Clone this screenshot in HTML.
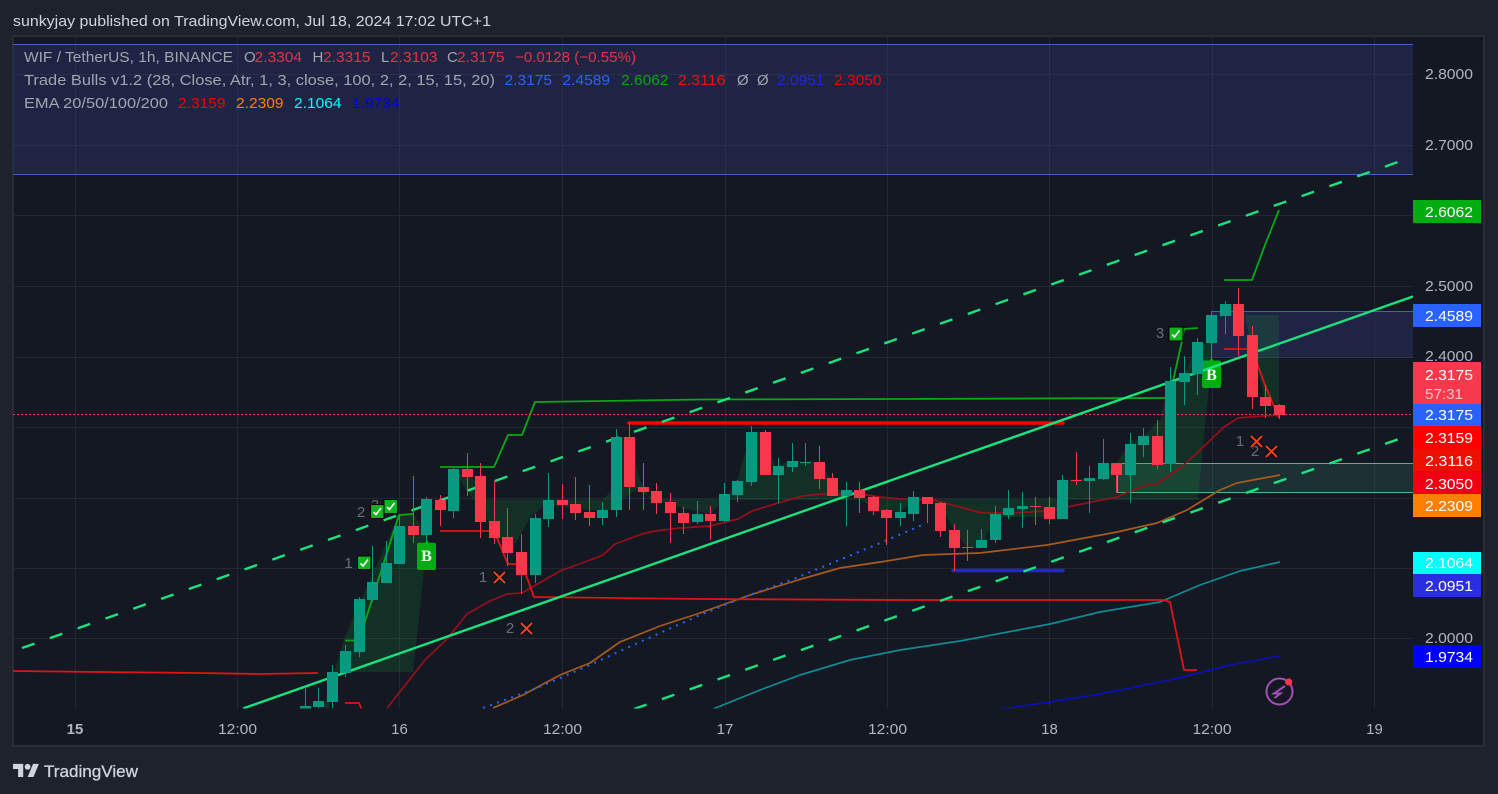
<!DOCTYPE html>
<html><head><meta charset="utf-8"><style>
html,body{margin:0;padding:0;background:#1e222d;width:1498px;height:794px;overflow:hidden}
svg{display:block;font-family:"Liberation Sans",sans-serif}
</style></head><body>
<svg width="1498" height="794" viewBox="0 0 1498 794" xmlns="http://www.w3.org/2000/svg">
<defs><clipPath id="p"><rect x="13" y="36" width="1400" height="672.5"/></clipPath></defs>
<rect width="1498" height="794" fill="#1e222d"/>
<rect x="13" y="36" width="1471" height="710" fill="#141823" stroke="#282c37" stroke-width="2"/>
<text x="13" y="26" font-size="15" fill="#d1d4dc" textLength="478" lengthAdjust="spacingAndGlyphs">sunkyjay published on TradingView.com, Jul 18, 2024 17:02 UTC+1</text>

<!-- grid -->
<g stroke="#232732" stroke-width="1" shape-rendering="crispEdges">
<path d="M75.5 37V708.5M237.5 37V708.5M399.5 37V708.5M562.5 37V708.5M725.5 37V708.5M887.5 37V708.5M1049.5 37V708.5M1212.5 37V708.5M1374.5 37V708.5"/>
<path d="M13 74.5H1413M13 145.5H1413M13 215.5H1413M13 286.5H1413M13 357.5H1413M13 427.5H1413M13 498.5H1413M13 568.5H1413M13 638.5H1413"/>
</g>

<g clip-path="url(#p)">
<!-- boxes -->
<rect x="13" y="44" width="1400" height="130" fill="#2a2f60" fill-opacity=".55"/>
<path d="M75.5 44V174M237.5 44V174M399.5 44V174M562.5 44V174M725.5 44V174M887.5 44V174M1049.5 44V174M1212.5 44V174M1374.5 44V174M13 74.5H1413M13 145.5H1413" stroke="#2a2f4a" shape-rendering="crispEdges"/>
<path d="M13 44.5H1413M13 174.5H1413" stroke="#3e63bd" shape-rendering="crispEdges"/>
<rect x="1211" y="311" width="202" height="46" fill="#2a2f60" fill-opacity=".55"/>
<path d="M1211.5 357V311.5H1413" fill="none" stroke="#3e63bd" shape-rendering="crispEdges"/>
<path d="M1211.5 357.5H1413" fill="none" stroke="#2e3550" shape-rendering="crispEdges"/>
<rect x="1117" y="463" width="296" height="30" fill="#4db592" fill-opacity=".16"/>
<path d="M1413 463.5H1117.5V492.5H1413" fill="none" stroke="#4db592" shape-rendering="crispEdges"/>

<!-- shaded areas -->
<g fill="#0aaa32" fill-opacity=".17">
<path d="M323 709L345 636L399 515L413 514L428 535L413 672H329V709Z"/>
<path d="M453 470L467 470L487 499.500H603L612 490L616 437H629L640 480L650 499H725L737 481L751 432H765L775 466L792 461L819 462L832 480L846 499H1057L1062 480L1103 478L1116 463L1130 444L1143 436L1160 420L1170 381L1185 373L1197 345L1211 343L1211 365L1198 498H1200L1198 500H1060L1060 517L995 517L981 548H967L954 530L940 505L930 500L915 500L900 512L880 510L860 500L846 500L836 500L800 500L740 500L724 500L710 514L670 505L635 490L610 510L590 510L545 505L530 518L510 553Z"/>
<path d="M1245 315H1279V405L1265 398L1252 350Z"/>
</g>

<!-- EMA lines -->
<g fill="none" stroke-width="1.7" stroke-linejoin="round">
<path stroke="#0c0fb4" d="M995 710L1050 702L1100 694L1170 680L1230 665L1280 656"/>
<path stroke="#0e8c94" d="M713 709L760 690L800 675L850 660L900 650L960 641L1050 624L1100 612L1160 602L1200 585L1240 571L1280 562"/>
<path stroke="#a85a1a" d="M493 708L523 695L560 675L590 663L620 642L660 626L700 613L750 595L798 580L840 568L887 561L923 555L980 553L1047 545L1117 532L1157 523L1187 510L1220 490L1237 483L1280 475"/>
<path stroke="#96101a" d="M387 708L425 660L447 639L467 614L490 601L507 594L522 593L560 571L590 560L603 555L615 544L642 534L655 531L680 528L710 526L738 519L752 511L778 503L803 496L820 494L860 494L880 497L900 499L933 500L982 513L1013 513L1047 511L1087 503L1117 497L1143 486L1157 484L1180 468L1197 453L1224 427L1238 418L1263 416L1280 415"/>
</g>
<path d="M483 708L537 688L590 665L620 651L700 615L750 595L796 578L885 541L922 525" fill="none" stroke="#2962ff" stroke-width="2" stroke-dasharray="2 5.500"/>

<!-- step lines -->
<g fill="none" stroke-width="1.800" stroke-linejoin="round">
<path stroke="#0aa814" d="M345 640.500H359L399 515L413 514M440 467H494L508 435H522L535 402L700 399.500L900 399L1165 398M1173 381L1182 341L1184 329L1198 328M1224 280H1252L1265 245L1279 210"/>
<path stroke="#e01414" d="M13 671L100 672L200 673L260 674L318 673M345 703H359L362 710M440 531H494L508 564H521L526 575L534 597L700 599L900 600L1164 600L1170 602L1184 670H1197M1224 349H1252L1265 385L1279 418"/>
</g>

<path d="M13 414.500H1413" stroke="#f7384b" stroke-dasharray="2 2" shape-rendering="crispEdges"/>
<path d="M629 423H1063" stroke="#ff0000" stroke-width="3.500" stroke-linecap="round"/>
<path d="M953 570.500H1063" stroke="#2323dc" stroke-width="3.500" stroke-linecap="round"/>

<!-- B second -->
<path d="M1204 360.500H1209.500L1211.500 358L1213.500 360.500H1219a2 2 0 0 1 2 2V386a2 2 0 0 1-2 2H1204a2 2 0 0 1-2-2V362.500a2 2 0 0 1 2-2Z" fill="#00ad10"/>
<text x="1211.500" y="380" font-size="16" font-weight="700" font-family="'Liberation Serif',serif" fill="#fff" text-anchor="middle">B</text>

<!-- trend lines -->
<g stroke="#17e47e" fill="none">
<path d="M243 708.500L1413 296.500" stroke-width="2.400"/>
<path d="M22 648L1398 162" stroke-width="2.400" stroke-dasharray="13.300 16.200"/>
<path d="M634 709L1413 434" stroke-width="2.400" stroke-dasharray="13.300 16.200"/>
</g>

<!-- candles -->
<g shape-rendering="crispEdges">
<path fill="none" stroke="#089981" d="M305.500 687V708M318.500 688V708M332.500 665V708M345.500 645V677M359.500 597V657M372.500 546V602M386.500 541V583M399.500 515V564M426.500 497V541M453.500 468V518M535.500 514V583M548.500 473V527M602.500 502V525M616.500 429V517M697.500 501V524M724.500 483V522M737.500 480V502M751.500 426V486M778.500 458V503M792.500 443V472M805.500 443V466M846.500 482V526M900.500 503V526M913.500 491V521M981.500 529V548M995.500 506V543M1008.500 490V519M1022.500 492V528M1062.500 475V519M1089.500 466V513M1103.500 439V480M1130.500 433V503M1143.500 428V457M1170.500 367V472M1184.500 356V405M1197.500 338V395M1211.500 315V365M1225.500 301V334"/>
<path fill="#089981" d="M300 706h11V709h-11zM313 701h11V707h-11zM327 672h11V702h-11zM340 651h11V673h-11zM354 599h11V652h-11zM367 582h11V600h-11zM381 563h11V583h-11zM394 526h11V564h-11zM421 499h11V535h-11zM448 469h11V511h-11zM530 518h11V575h-11zM543 500h11V519h-11zM597 510h11V518h-11zM611 437h11V510h-11zM692 514h11V522h-11zM719 494h11V521h-11zM732 481h11V495h-11zM746 432h11V482h-11zM773 466h11V475h-11zM787 461h11V467h-11zM800 462h11V463h-11zM841 490h11V496h-11zM895 512h11V518h-11zM908 497h11V514h-11zM976 540h11V548h-11zM990 514h11V540h-11zM1003 508h11V515h-11zM1017 506h11V509h-11zM1057 480h11V519h-11zM1084 478h11V481h-11zM1098 463h11V479h-11zM1125 444h11V475h-11zM1138 436h11V445h-11zM1165 381h11V464h-11zM1179 373h11V382h-11zM1192 342h11V374h-11zM1206 315h11V343h-11zM1220 304h11V316h-11z"/>
<path fill="none" stroke="#f7384b" d="M413.500 476V543M440.500 495V526M467.500 453V496M480.500 463V538M494.500 481V544M507.500 508V566M521.500 534V594M562.500 484V519M575.500 477V520M589.500 485V526M629.500 423V510M643.500 463V510M656.500 483V514M670.500 493V543M683.500 507V534M710.500 506V540M765.500 430V475M819.500 446V489M832.500 473V496M859.500 482V513M873.500 496V515M886.500 509V545M927.500 497V523M940.500 502V537M954.500 524V571M967.500 530V561M1035.500 497V525M1049.500 497V524M1076.500 452V485M1116.500 463V493M1157.500 420V469M1238.500 288V356M1252.500 326V409M1265.500 385V418M1279.500 404V419"/>
<path fill="#f7384b" d="M408 526h11V535h-11zM435 500h11V510h-11zM462 469h11V477h-11zM475 476h11V522h-11zM489 521h11V538h-11zM502 537h11V553h-11zM516 552h11V575h-11zM557 500h11V505h-11zM570 504h11V513h-11zM584 512h11V518h-11zM624 437h11V487h-11zM638 487h11V492h-11zM651 491h11V503h-11zM665 502h11V513h-11zM678 513h11V523h-11zM705 514h11V521h-11zM760 432h11V475h-11zM814 462h11V479h-11zM827 478h11V496h-11zM854 490h11V498h-11zM868 497h11V511h-11zM881 510h11V518h-11zM922 497h11V504h-11zM935 503h11V531h-11zM949 530h11V548h-11zM962 547h11V548h-11zM1030 506h11V507h-11zM1044 507h11V519h-11zM1071 480h11V481h-11zM1111 463h11V475h-11zM1152 436h11V465h-11zM1233 304h11V336h-11zM1247 335h11V397h-11zM1260 397h11V406h-11zM1274 405h11V415h-11z"/>
</g>
</g>

<!-- B first -->
<path d="M419 542.700H425L427 540L429 542.700H434a2 2 0 0 1 2 2V568a2 2 0 0 1-2 2H419a2 2 0 0 1-2-2V544.700a2 2 0 0 1 2-2Z" fill="#00ad10"/>
<text x="426.500" y="561" font-size="16" font-weight="700" font-family="'Liberation Serif',serif" fill="#fff" text-anchor="middle">B</text>

<!-- numbers -->
<g font-size="15" fill="#6a6d78" text-anchor="middle">
<text x="348.500" y="568">1</text><text x="361" y="517">2</text><text x="375" y="510">3</text>
<text x="483" y="582">1</text><text x="510" y="633">2</text>
<text x="1160" y="338">3</text><text x="1240" y="446">1</text><text x="1255" y="456">2</text>
</g>
<!-- check marks -->
<g fill="#0fb41e" stroke="#000" stroke-width="1">
<rect x="357.500" y="556" width="13.500" height="13.500"/><rect x="370.500" y="504.500" width="13.500" height="14"/><rect x="384" y="499.500" width="13.500" height="14"/><rect x="1169" y="327" width="14" height="14"/>
</g>
<g fill="none" stroke="#fff" stroke-width="1.600">
<path d="M360.500 563.500L363 566L368 559.500"/><path d="M373.500 512L376 514.500L381 508"/><path d="M387 507L389.500 509.500L394.500 503"/><path d="M1172 334.500L1174.500 337L1179.500 330.500"/>
</g>
<!-- X marks -->
<g fill="none" stroke="#000" stroke-width="4" stroke-opacity=".75">
<path d="M494 572L505 583M505 572L494 583M521 623L532 634M532 623L521 634M1251 436L1262 447M1262 436L1251 447M1266 446L1277 457M1277 446L1266 457"/>
</g>
<g fill="none" stroke="#f2431f" stroke-width="2">
<path d="M494 572L505 583M505 572L494 583M521 623L532 634M532 623L521 634M1251 436L1262 447M1262 436L1251 447M1266 446L1277 457M1277 446L1266 457"/>
</g>

<!-- lightning icon -->
<circle cx="1279.500" cy="691.500" r="13" fill="none" stroke="#a34fb5" stroke-width="2"/>
<path d="M1285 686L1274 693.500H1280.500L1274.500 698" fill="none" stroke="#a34fb5" stroke-width="2"/>
<circle cx="1288.700" cy="682" r="3.600" fill="#f23645"/>

<!-- legend -->
<g font-size="15">
<g fill="#a1a5ae">
<text x="24" y="62" textLength="209" lengthAdjust="spacingAndGlyphs">WIF / TetherUS, 1h, BINANCE</text>
<text x="244" y="62">O</text><text x="312.500" y="62">H</text><text x="381" y="62">L</text><text x="447" y="62">C</text>
<text x="24" y="85" textLength="471" lengthAdjust="spacingAndGlyphs">Trade Bulls v1.2 (28, Close, Atr, 1, 3, close, 100, 2, 2, 15, 15, 20)</text>
<text x="737" y="85">Ø</text><text x="757" y="85">Ø</text>
<text x="24" y="108" textLength="144" lengthAdjust="spacingAndGlyphs">EMA 20/50/100/200</text>
</g>
<g fill="#e03347">
<text x="254.500" y="62" textLength="47.500" lengthAdjust="spacingAndGlyphs">2.3304</text>
<text x="323" y="62" textLength="47.500" lengthAdjust="spacingAndGlyphs">2.3315</text>
<text x="390" y="62" textLength="47.500" lengthAdjust="spacingAndGlyphs">2.3103</text>
<text x="457" y="62" textLength="47.500" lengthAdjust="spacingAndGlyphs">2.3175</text>
<text x="515" y="62" textLength="121" lengthAdjust="spacingAndGlyphs">−0.0128 (−0.55%)</text>
</g>
<text x="504.500" y="85" fill="#2962ff" textLength="47.500" lengthAdjust="spacingAndGlyphs">2.3175</text>
<text x="562.500" y="85" fill="#2962ff" textLength="47.500" lengthAdjust="spacingAndGlyphs">2.4589</text>
<text x="621" y="85" fill="#00a80e" textLength="47.500" lengthAdjust="spacingAndGlyphs">2.6062</text>
<text x="678" y="85" fill="#e61414" textLength="47.500" lengthAdjust="spacingAndGlyphs">2.3116</text>
<text x="777" y="85" fill="#2424d8" textLength="47.500" lengthAdjust="spacingAndGlyphs">2.0951</text>
<text x="834" y="85" fill="#f00000" textLength="47.500" lengthAdjust="spacingAndGlyphs">2.3050</text>
<text x="178" y="108" fill="#f00000" textLength="47.500" lengthAdjust="spacingAndGlyphs">2.3159</text>
<text x="236" y="108" fill="#ff7f00" textLength="47.500" lengthAdjust="spacingAndGlyphs">2.2309</text>
<text x="294" y="108" fill="#00ffff" textLength="47.500" lengthAdjust="spacingAndGlyphs">2.1064</text>
<text x="352" y="108" fill="#0000e0" textLength="47.500" lengthAdjust="spacingAndGlyphs">1.9734</text>
</g>

<!-- price axis -->
<g font-size="15" fill="#b2b5be">
<text x="1425" y="79" textLength="48" lengthAdjust="spacingAndGlyphs">2.8000</text>
<text x="1425" y="150" textLength="48" lengthAdjust="spacingAndGlyphs">2.7000</text>
<text x="1425" y="291" textLength="48" lengthAdjust="spacingAndGlyphs">2.5000</text>
<text x="1425" y="361" textLength="48" lengthAdjust="spacingAndGlyphs">2.4000</text>
<text x="1425" y="643" textLength="48" lengthAdjust="spacingAndGlyphs">2.0000</text>
</g>
<g shape-rendering="crispEdges">
<rect x="1413" y="200" width="68" height="23" fill="#00ad10"/>
<rect x="1413" y="304" width="68" height="23" fill="#2962ff"/>
<rect x="1413" y="362" width="68" height="42" fill="#f6394c"/>
<rect x="1413" y="404" width="68" height="22" fill="#2962ff"/>
<rect x="1413" y="426" width="68" height="23" fill="#ff0000"/>
<rect x="1413" y="449" width="68" height="22" fill="#ec1000"/>
<rect x="1413" y="471" width="68" height="23" fill="#f00010"/>
<rect x="1413" y="494" width="68" height="23" fill="#ff7f00"/>
<rect x="1413" y="552" width="68" height="22" fill="#00ffff"/>
<rect x="1413" y="574" width="68" height="23" fill="#2a2ee0"/>
<rect x="1413" y="645" width="68" height="23" fill="#0000ff"/>
</g>
<g font-size="15" fill="#fff">
<text x="1425" y="217" textLength="48" lengthAdjust="spacingAndGlyphs">2.6062</text>
<text x="1425" y="321" textLength="48" lengthAdjust="spacingAndGlyphs">2.4589</text>
<text x="1425" y="380" textLength="48" lengthAdjust="spacingAndGlyphs">2.3175</text>
<text x="1425" y="399" fill="#ffc4ca" textLength="38" lengthAdjust="spacingAndGlyphs">57:31</text>
<text x="1425" y="420" textLength="48" lengthAdjust="spacingAndGlyphs">2.3175</text>
<text x="1425" y="443" textLength="48" lengthAdjust="spacingAndGlyphs">2.3159</text>
<text x="1425" y="466" textLength="48" lengthAdjust="spacingAndGlyphs">2.3116</text>
<text x="1425" y="489" textLength="48" lengthAdjust="spacingAndGlyphs">2.3050</text>
<text x="1425" y="511" textLength="48" lengthAdjust="spacingAndGlyphs">2.2309</text>
<text x="1425" y="568" textLength="48" lengthAdjust="spacingAndGlyphs">2.1064</text>
<text x="1425" y="591" textLength="48" lengthAdjust="spacingAndGlyphs">2.0951</text>
<text x="1425" y="662" textLength="48" lengthAdjust="spacingAndGlyphs">1.9734</text>
</g>

<!-- time axis -->
<g font-size="15" fill="#b2b5be" text-anchor="middle">
<text x="75" y="734" font-weight="700">15</text>
<text x="237.500" y="734" textLength="39" lengthAdjust="spacingAndGlyphs">12:00</text>
<text x="399.500" y="734">16</text>
<text x="562.500" y="734" textLength="39" lengthAdjust="spacingAndGlyphs">12:00</text>
<text x="725" y="734">17</text>
<text x="887.500" y="734" textLength="39" lengthAdjust="spacingAndGlyphs">12:00</text>
<text x="1049.500" y="734">18</text>
<text x="1212" y="734" textLength="39" lengthAdjust="spacingAndGlyphs">12:00</text>
<text x="1374.500" y="734">19</text>
</g>

<!-- logo -->
<g transform="translate(13 761) scale(.73)" fill="#d1d4dc">
<path d="M14 22H7V11H0V4h14v18zM28 22h-8l7.500-18h8L28 22z"/><circle cx="20" cy="8" r="4"/>
</g>
<text x="44" y="777" font-size="17" fill="#d1d4dc" stroke="#d1d4dc" stroke-width=".3" textLength="94" lengthAdjust="spacingAndGlyphs">TradingView</text>
</svg>
</body></html>
